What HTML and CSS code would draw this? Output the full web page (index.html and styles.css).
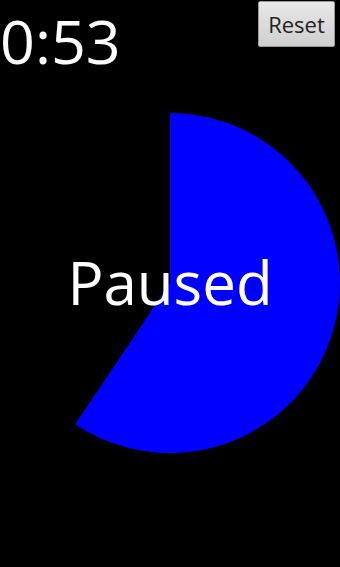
FILE: index.html
```html
<!DOCTYPE html>
<html>
<head>
<meta charset="utf-8">
<link rel="stylesheet" href="styles.css">
</head>
<body>
<div class="screen">
  <div class="top">
    <div class="time">0:53</div>
    <button class="reset">Reset</button>
  </div>
  <div class="dial">
    <svg class="pie" width="340" height="340" viewBox="0 0 340 340">
      <path d="M170,0 A170,170 0 1 1 75.2,311.2 L170,170 Z" fill="#0000ff"/>
    </svg>
    <div class="status">Paused</div>
  </div>
</div>
</body>
</html>
```
FILE: styles.css
```css
html, body {
  margin: 0;
  padding: 0;
  background: #000;
}
.screen {
  width: 340px;
  height: 567px;
  background: #000;
  font-family: "Open Sans", "Noto Sans", sans-serif;
  color: #fff;
}
.top {
  display: flex;
  justify-content: space-between;
  align-items: flex-start;
  height: 113px;
}
.time {
  font-size: 61px;
  line-height: 1;
  margin-top: 10px;
  margin-left: 0px;
}
.reset {
  margin-top: 1px;
  margin-right: 5px;
  width: 77px;
  height: 46px;
  padding: 0;
  border: 1px solid #9a9a9a;
  border-radius: 2px;
  background: linear-gradient(#e8e8e8, #cfcfcf);
  color: #222;
  font-family: "Open Sans", "Noto Sans", sans-serif;
  font-size: 22px;
}
.dial {
  position: relative;
  width: 340px;
  height: 340px;
}
.pie {
  display: block;
}
.status {
  position: absolute;
  left: 0;
  right: 0;
  top: 139px;
  text-align: center;
  font-size: 60px;
  line-height: 1;
  color: #fff;
}
```
